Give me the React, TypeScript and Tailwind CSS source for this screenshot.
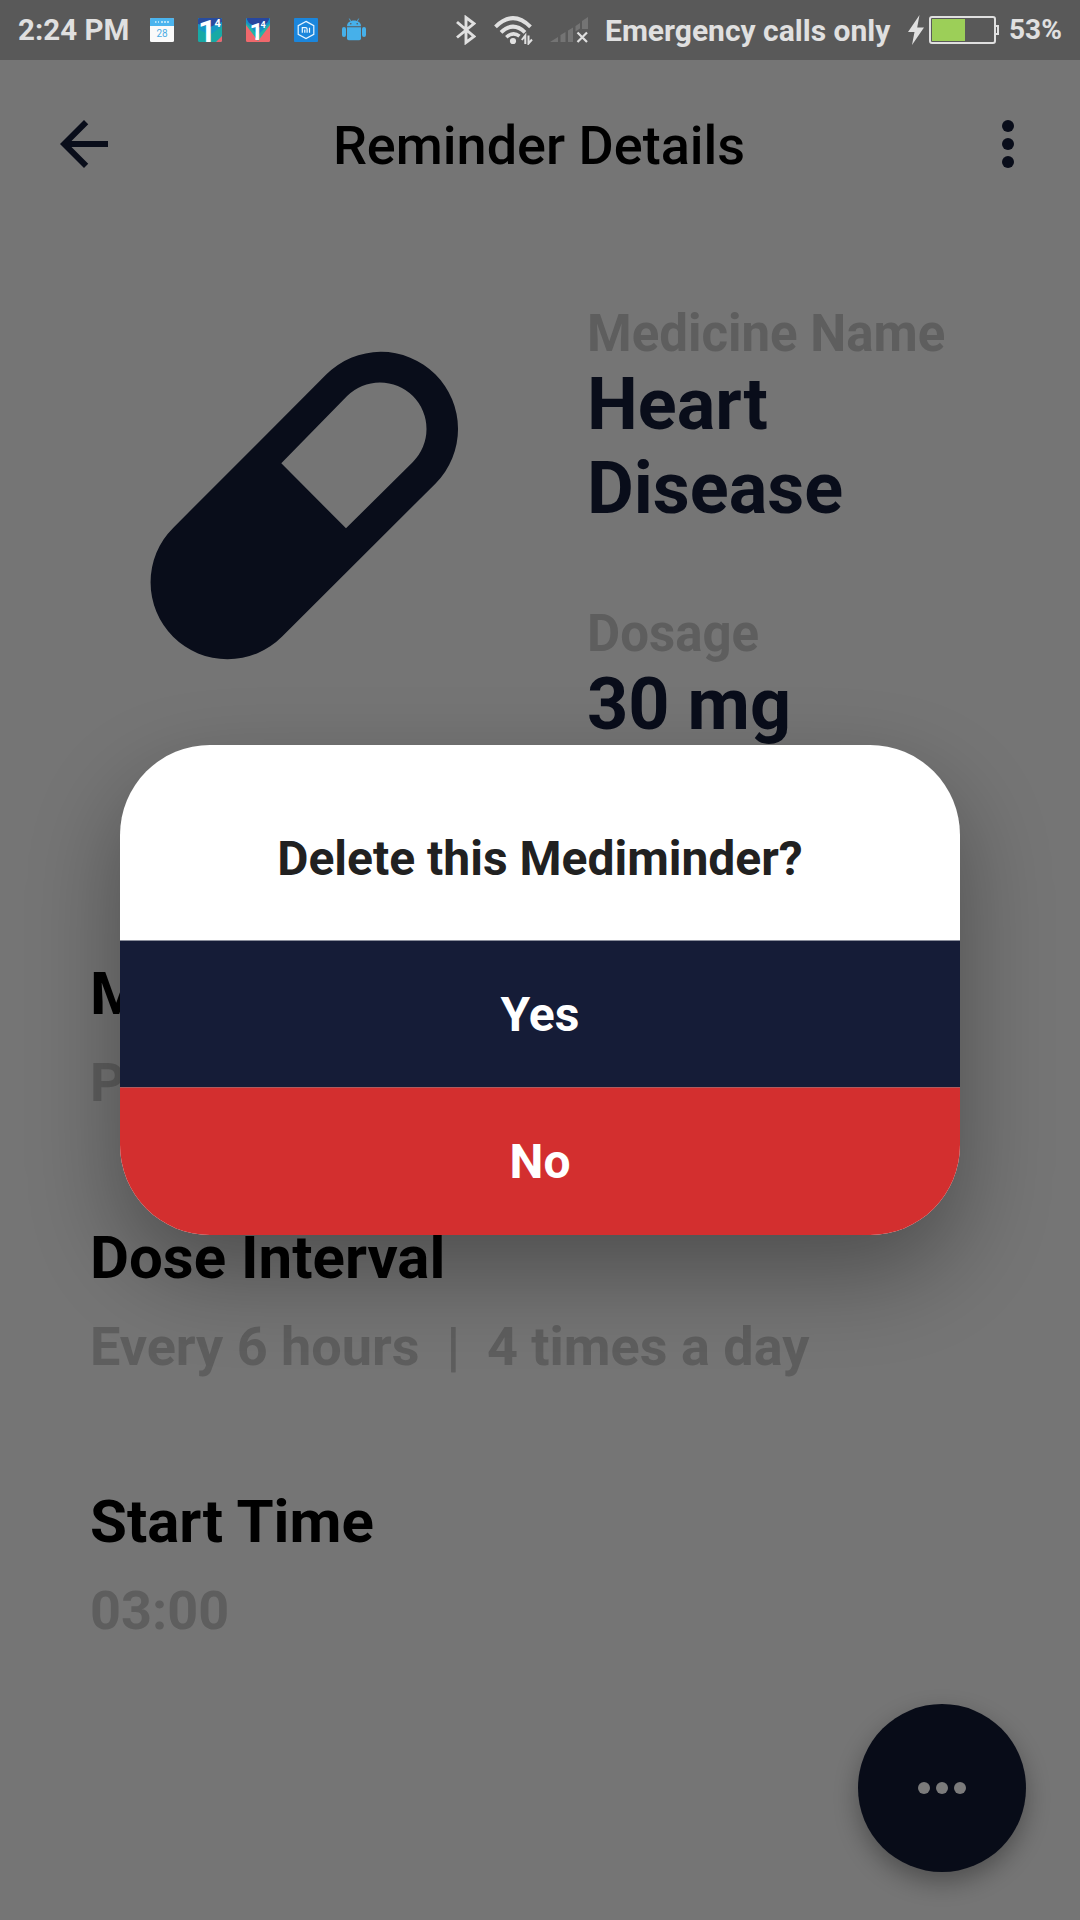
import React from "react";

function CalendarIcon() {
  return (
    <svg className="block h-6 w-6" viewBox="0 0 24 24">
      <rect width="24" height="24" rx="1.5" fill="#fafafa" />
      <path d="M0 8V1.5A1.5 1.5 0 0 1 1.5 0h21A1.5 1.5 0 0 1 24 1.5V8z" fill="#4bb4ee" />
      <path d="M5 4h1.5M8 4h1M11 4h2M14 4h2M17 4h2" stroke="#d4effc" strokeWidth="1.600" />
      <text x="12" y="19.300" textAnchor="middle" fontFamily="Roboto" fontSize="10" fontWeight="400" fill="#4bace4">28</text>
    </svg>
  );
}

function OneFourIcon({ coral }: { coral?: boolean }) {
  return (
    <svg className="block h-6 w-6 overflow-visible" viewBox="0 0 24 24">
      <defs>
        <clipPath id={coral ? "tileB" : "tileA"}>
          <rect width="24" height="24" rx="1.5" />
        </clipPath>
      </defs>
      <g clipPath={coral ? "url(#tileB)" : "url(#tileA)"}>
        <rect width="24" height="24" fill={coral ? "#f0686c" : "#18a9a5"} />
        {coral ? (
          <>
            <path d="M0 7l12 16L24 7V0H0z" fill="#22b5a5" />
            <path d="M0 5l12 12L24 5V0H0z" fill="#168fc5" />
            <path d="M0 0h24l-3 5-9 5-9-5z" fill="#27479f" />
          </>
        ) : (
          <>
            <path d="M0 0h24v8L12 17 0 11z" fill="#1598c4" />
            <path d="M0 0h24v4L12 9 0 6z" fill="#284c9e" />
            <path d="M24 18v6h-6z" fill="#e96770" />
          </>
        )}
      </g>
      <text x={coral ? 3.5 : 0} y={coral ? 21.5 : 24} fontFamily="Roboto" fontWeight="700" fontSize={coral ? 24 : 32} fill="#fff">1</text>
      <text x={coral ? 14.5 : 16.500} y={coral ? 10 : 8.500} fontFamily="Roboto" fontWeight="700" fontSize={coral ? 9 : 11} fill="#fff">4</text>
    </svg>
  );
}

function MiIcon() {
  return (
    <svg className="block h-6 w-6" viewBox="0 0 24 24">
      <rect width="24" height="24" rx="1" fill="#1b86dc" />
      <path d="M12 3.4l7.8 4.3v8.6L12 20.6l-7.8-4.3V7.7z" fill="none" stroke="#e6f4ff" strokeWidth="1.2" />
      <path d="M8.3 14.8V9.7h3.2q1.6 0 1.6 1.6v3.5M10.8 11.4v3.4M15.5 9.7v5.1" fill="none" stroke="#f2faff" strokeWidth="1.2" />
    </svg>
  );
}

function AndroidIcon() {
  return (
    <svg className="block h-6 w-6" viewBox="0 0 24 24" fill="#46b0ea">
      <path d="M5 8.3C5 4.8 8 2.6 12 2.6s7 2.2 7 5.7z" />
      <path d="M7.3.6l1.6 3M16.7.6l-1.6 3" stroke="#46b0ea" strokeWidth=".9" />
      <path d="M5 9.2h14v11.3a1.8 1.8 0 0 1-1.8 1.8H6.8A1.8 1.8 0 0 1 5 20.500z" />
      <rect x="0" y="9" width="4" height="10" rx="2" />
      <rect x="20" y="9" width="4" height="10" rx="2" />
      <circle cx="8.8" cy="5.8" r=".8" fill="#595959" />
      <circle cx="15.200" cy="5.8" r=".8" fill="#595959" />
    </svg>
  );
}

function BluetoothIcon() {
  return (
    <svg className="block h-[30px] w-5" viewBox="0 0 20 30" fill="none" stroke="#e0e0e0" strokeWidth="2.900">
      <path d="M1 7l17 14.500L10 27.500V2.500l8 6L1 22.500" />
    </svg>
  );
}

function WifiIcon() {
  return (
    <svg className="block h-[29px] w-[39px]" viewBox="0 0 39 29" fill="none" stroke="#e0e0e0" strokeWidth="3.900">
      <path d="M1.500 10.800Q19 -6.500 36.500 10.800" />
      <path d="M7 16.300Q19 5 31 16.300" />
      <path d="M12.300 21.300Q19 15 25.500 20.200" strokeWidth="3.500" />
      <circle cx="19" cy="25" r="3.100" fill="#e0e0e0" stroke="none" />
      <path d="M31.300 28V19.500L27.800 24M34.500 19.500V27.500L38 23.500" strokeWidth="2" />
    </svg>
  );
}

function SignalIcon() {
  return (
    <svg className="block h-[26px] w-[38px]" viewBox="0 0 38 26">
      <path d="M0 25l8-5v5zM10.500 18l5-3v10h-5zM18 13.500l5-3V25h-5zM25.500 9l4.500-3v5.500l-4.500 3zM32 4l6-4v12h-6z" fill="#747474" />
      <path d="M27.500 15.500l9.500 9.500M37 15.500L27.500 25" stroke="#e0e0e0" strokeWidth="2.200" />
    </svg>
  );
}

function StatusBar() {
  return (
    <div className="flex h-[60px] items-center bg-[#595959] pl-[18px] text-[30px] font-bold whitespace-nowrap text-[#e0e0e0]">
      <span className="w-[132px] text-[29.5px]">2:24 PM</span>
      <div className="flex gap-6">
        <CalendarIcon />
        <OneFourIcon />
        <OneFourIcon coral />
        <MiIcon />
        <AndroidIcon />
      </div>
      <div className="ml-[90px] flex items-center">
        <BluetoothIcon />
        <div className="ml-[18px]"><WifiIcon /></div>
        <div className="ml-[17px]"><SignalIcon /></div>
      </div>
      <span className="ml-[17px] w-[303px]">Emergency calls only</span>
      <svg className="block h-[30px] w-4 shrink-0" viewBox="0 0 16 30" fill="#e0e0e0">
        <path d="M11.500 0L0 17h6.500L4 30l12-17.500H9.200z" />
      </svg>
      <div className="ml-[5px] h-7 w-[67px] shrink-0 rounded-[3px] border-2 border-[#e0e0e0] p-px">
        <div className="h-full w-[33px] bg-[#9ccf58]" />
      </div>
      <div className="h-2.5 w-[3px] shrink-0 border-2 border-l-0 border-[#e0e0e0]" />
      <span className="ml-[10px] text-[28px]">53%</span>
    </div>
  );
}

function AppBar() {
  return (
    <header className="flex h-[168px] items-center justify-between px-9 text-[#090d1a]">
      <svg className="ml-3 block h-[72px] w-[72px]" viewBox="0 0 24 24" fill="currentColor">
        <path d="M20 11H7.830l5.590-5.590L12 4l-8 8 8 8 1.410-1.410L7.830 13H20v-2z" />
      </svg>
      <h1 className="mr-3.5 pt-[3px] text-[54px] leading-[64px] font-medium text-black">Reminder Details</h1>
      <svg className="block h-[72px] w-[72px]" viewBox="0 0 24 24" fill="currentColor">
        <circle cx="12" cy="6" r="2" />
        <circle cx="12" cy="12" r="2" />
        <circle cx="12" cy="18" r="2" />
      </svg>
    </header>
  );
}

function MainFact({ label, value }: { label: string; value: string }) {
  return (
    <div>
      <div className="text-[51px] leading-[60px] font-bold whitespace-nowrap text-[#5e5e5e]">{label}</div>
      <div className="-mt-px text-[72px] leading-[84px] font-bold text-[#090d1a]">{value}</div>
    </div>
  );
}

function Detail({ title, value }: { title: string; value: string }) {
  return (
    <div className="h-[264px]">
      <div className="text-[60px] leading-[70px] font-bold text-black">{title}</div>
      <div className="mt-[22px] text-[54px] leading-[64px] font-bold whitespace-pre text-[#5e5e5e]">{value}</div>
    </div>
  );
}

function DeleteDialog() {
  return (
    <div className="absolute inset-0 flex justify-center pt-[745px]">
      <div className="h-[490px] w-[840px] overflow-hidden rounded-[90px] bg-white text-center text-[48px] font-bold shadow-[0_38px_92px_rgba(0,0,0,0.33)]">
        <div className="h-[195px] pt-[85px] leading-[57px] text-[#212121]">Delete this Mediminder?</div>
        <button className="block h-[147px] w-full border-t border-[#8a8e9b] bg-[#151c37] pt-px text-white">Yes</button>
        <button className="block h-[148px] w-full border-t border-[#b05a5e] bg-[#d32f2f] pt-px text-white">No</button>
      </div>
    </div>
  );
}

export default function App() {
  return (
    <div className="relative h-[1920px] w-[1080px] overflow-hidden bg-[#757575] font-['Roboto',sans-serif]">
      <StatusBar />
      <AppBar />
      <main>
        <section className="flex h-[731px] pt-[76px] pl-[150px]">
          <svg className="mt-[47px] block h-[309px] w-[309px]" viewBox="150 351 309 309">
            <path
              fillRule="evenodd"
              fill="#090d1a"
              d="M326.200 374.600A76 76 0 0 1 435.600 483.400L281.900 636.700A76 76 0 0 1 173.100 527.900ZM347.100 396.100L281.300 463.300L346 528.300L412.900 461.900A46.500 46.500 0 0 0 347.100 396.100Z"
            />
          </svg>
          <div className="ml-[128px] flex w-[390px] flex-col gap-[73px]">
            <MainFact label="Medicine Name" value="Heart Disease" />
            <MainFact label="Dosage" value="30 mg" />
          </div>
        </section>
        <section className="pl-[90px]">
          <Detail title="Medicine Type" value="Pill" />
          <Detail title="Dose Interval" value="Every 6 hours  |  4 times a day" />
          <Detail title="Start Time" value="03:00" />
        </section>
      </main>
      <button className="absolute top-[1704px] left-[858px] flex h-[168px] w-[168px] items-center justify-center gap-1.5 rounded-full bg-[#080c18] shadow-[0_10px_24px_rgba(0,0,0,0.32)]">
        <span className="h-3 w-3 rounded-full bg-[#7b7b7b]" />
        <span className="h-3 w-3 rounded-full bg-[#7b7b7b]" />
        <span className="h-3 w-3 rounded-full bg-[#7b7b7b]" />
      </button>
      <DeleteDialog />
    </div>
  );
}
